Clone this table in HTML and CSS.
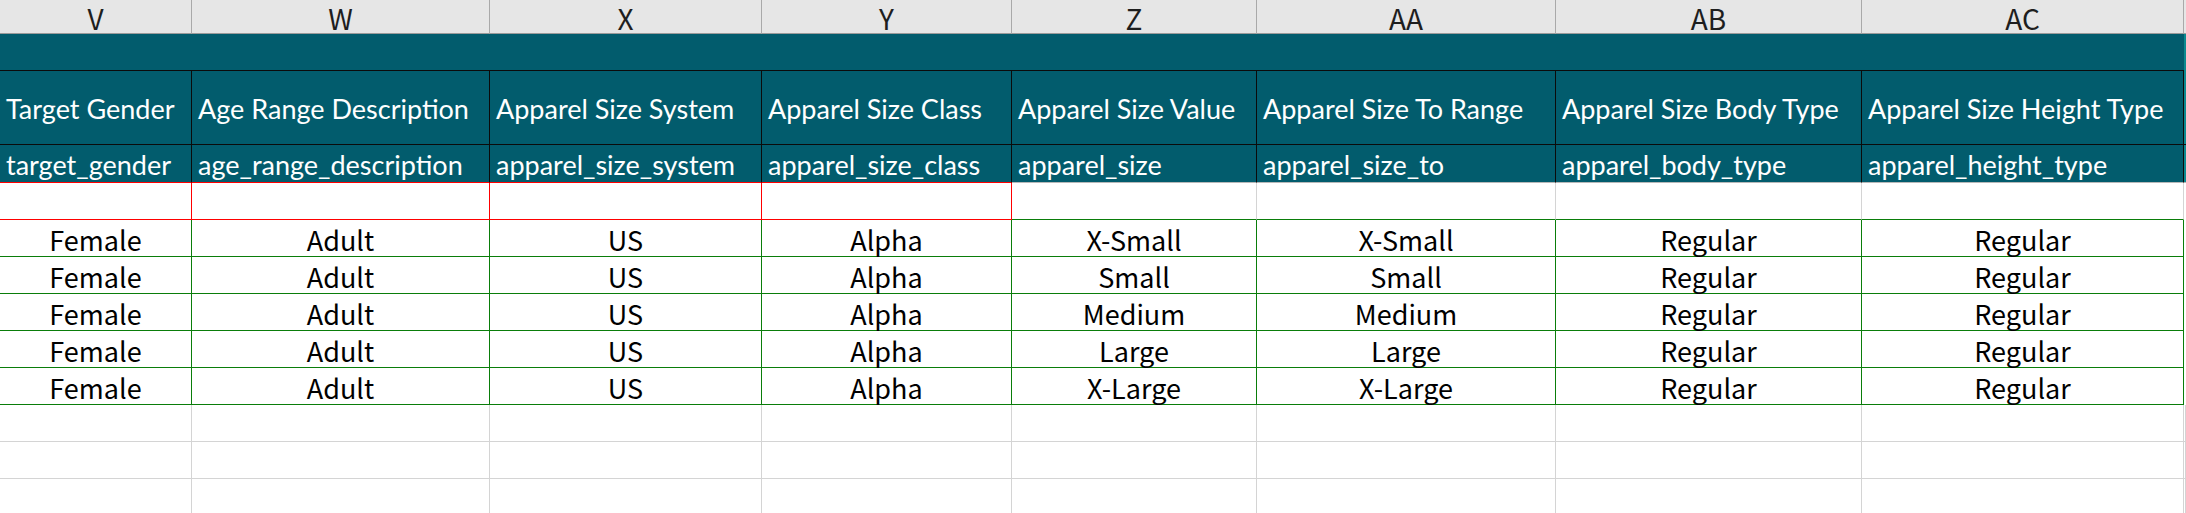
FILE: index.html
```html
<!DOCTYPE html>
<html>
<head>
<meta charset="utf-8">
<link rel="stylesheet" href="styles.css">
</head>
<body>
<div class="sheet">
  <div class="row colhead">
    <div class="c">V</div><div class="c">W</div><div class="c">X</div><div class="c">Y</div><div class="c">Z</div><div class="c">AA</div><div class="c">AB</div><div class="c">AC</div><div class="c stub"></div>
  </div>
  <div class="row band">
    <div class="c span8"></div><div class="c stub"></div>
  </div>
  <div class="row titles">
    <div class="c">Target Gender</div><div class="c">Age Range Description</div><div class="c">Apparel Size System</div><div class="c">Apparel Size Class</div><div class="c">Apparel Size Value</div><div class="c">Apparel Size To Range</div><div class="c">Apparel Size Body Type</div><div class="c">Apparel Size Height Type</div><div class="c stub"></div>
  </div>
  <div class="row keys">
    <div class="c red-b">target_gender</div><div class="c red-b">age_range_description</div><div class="c red-b">apparel_size_system</div><div class="c red-b">apparel_size_class</div><div class="c">apparel_size</div><div class="c">apparel_size_to</div><div class="c">apparel_body_type</div><div class="c">apparel_height_type</div><div class="c stub"></div>
  </div>
  <div class="row empty">
    <div class="c red"></div><div class="c red"></div><div class="c red"></div><div class="c red"></div><div class="c grid green-b"></div><div class="c grid green-b"></div><div class="c grid green-b"></div><div class="c grid green-b"></div><div class="c"></div>
  </div>
  <div class="row data">
    <div class="c">Female</div><div class="c">Adult</div><div class="c">US</div><div class="c">Alpha</div><div class="c">X-Small</div><div class="c">X-Small</div><div class="c">Regular</div><div class="c">Regular</div><div class="c blank"></div>
  </div>
  <div class="row data">
    <div class="c">Female</div><div class="c">Adult</div><div class="c">US</div><div class="c">Alpha</div><div class="c">Small</div><div class="c">Small</div><div class="c">Regular</div><div class="c">Regular</div><div class="c blank"></div>
  </div>
  <div class="row data">
    <div class="c">Female</div><div class="c">Adult</div><div class="c">US</div><div class="c">Alpha</div><div class="c">Medium</div><div class="c">Medium</div><div class="c">Regular</div><div class="c">Regular</div><div class="c blank"></div>
  </div>
  <div class="row data">
    <div class="c">Female</div><div class="c">Adult</div><div class="c">US</div><div class="c">Alpha</div><div class="c">Large</div><div class="c">Large</div><div class="c">Regular</div><div class="c">Regular</div><div class="c blank"></div>
  </div>
  <div class="row data">
    <div class="c">Female</div><div class="c">Adult</div><div class="c">US</div><div class="c">Alpha</div><div class="c">X-Large</div><div class="c">X-Large</div><div class="c">Regular</div><div class="c">Regular</div><div class="c blank"></div>
  </div>
  <div class="row plain">
    <div class="c"></div><div class="c"></div><div class="c"></div><div class="c"></div><div class="c"></div><div class="c"></div><div class="c"></div><div class="c"></div><div class="c"></div>
  </div>
  <div class="row plain">
    <div class="c"></div><div class="c"></div><div class="c"></div><div class="c"></div><div class="c"></div><div class="c"></div><div class="c"></div><div class="c"></div><div class="c"></div>
  </div>
  <div class="row plain">
    <div class="c"></div><div class="c"></div><div class="c"></div><div class="c"></div><div class="c"></div><div class="c"></div><div class="c"></div><div class="c"></div><div class="c"></div>
  </div>
</div>
</body>
</html>
```

FILE: styles.css
```css
html, body {
  margin: 0;
  padding: 0;
  background: #ffffff;
  overflow: hidden;
}

.sheet {
  --cols: 192px 298px 272px 250px 245px 299px 306px 322px 2px;
  width: 2186px;
  font-family: "Noto Sans CJK SC", "Noto Sans", sans-serif;
}

.row {
  display: grid;
  grid-template-columns: var(--cols);
  height: 37px;
}

.c {
  box-sizing: border-box;
  display: flex;
  align-items: center;
  min-width: 0;
  white-space: nowrap;
  line-height: 1;
}

/* column letters */
.colhead {
  height: 34px;
  background: #e6e6e6;
}
.colhead .c {
  justify-content: center;
  border-right: 1px solid #a9a9a9;
  border-bottom: 1px solid #9a9a9a;
  font-size: 28px;
  color: #1e1e1e;
  padding-top: 2px;
}
.colhead .stub {
  border-right: none;
}

/* teal band */
.band {
  background: #025c6d;
}
.band .span8 {
  grid-column: 1 / 9;
  border-bottom: 1px solid #0b0b0b;
}
.band .stub,
.titles .stub,
.keys .stub {
  background: #0c8a90;
  border: none;
}

/* header titles */
.titles,
.keys {
  background: #025c6d;
}
.titles {
  height: 74px;
}
.keys {
  height: 38px;
}
.titles .c,
.keys .c {
  font-family: "Lato", "Liberation Sans", sans-serif;
  font-size: 27px;
  color: #ffffff;
  padding-left: 6px;
  border-right: 1px solid #0b0b0b;
  border-bottom: 1px solid #0b0b0b;
}
.titles .c {
  padding-top: 2px;
}
.keys .c {
  padding-top: 2px;
  border-bottom-color: #b8b8b8;
}
.keys .red-b {
  border-bottom-color: #ff0000;
}

/* empty row */
.empty .red {
  border-right: 1px solid #ff0000;
  border-bottom: 1px solid #ff0000;
}
.empty .grid {
  border-right: 1px solid #d4d4d4;
}
.empty .green-b {
  border-bottom: 1px solid #0a7d0a;
}

/* data rows */
.data .c {
  justify-content: center;
  font-size: 27px;
  color: #000000;
  border-right: 1px solid #0a7d0a;
  border-bottom: 1px solid #0a7d0a;
  padding-top: 2px;
}
.data .blank {
  border: none;
}

/* plain grid rows */
.plain .c {
  border-right: 1px solid #d4d4d4;
  border-bottom: 1px solid #d4d4d4;
}
```
